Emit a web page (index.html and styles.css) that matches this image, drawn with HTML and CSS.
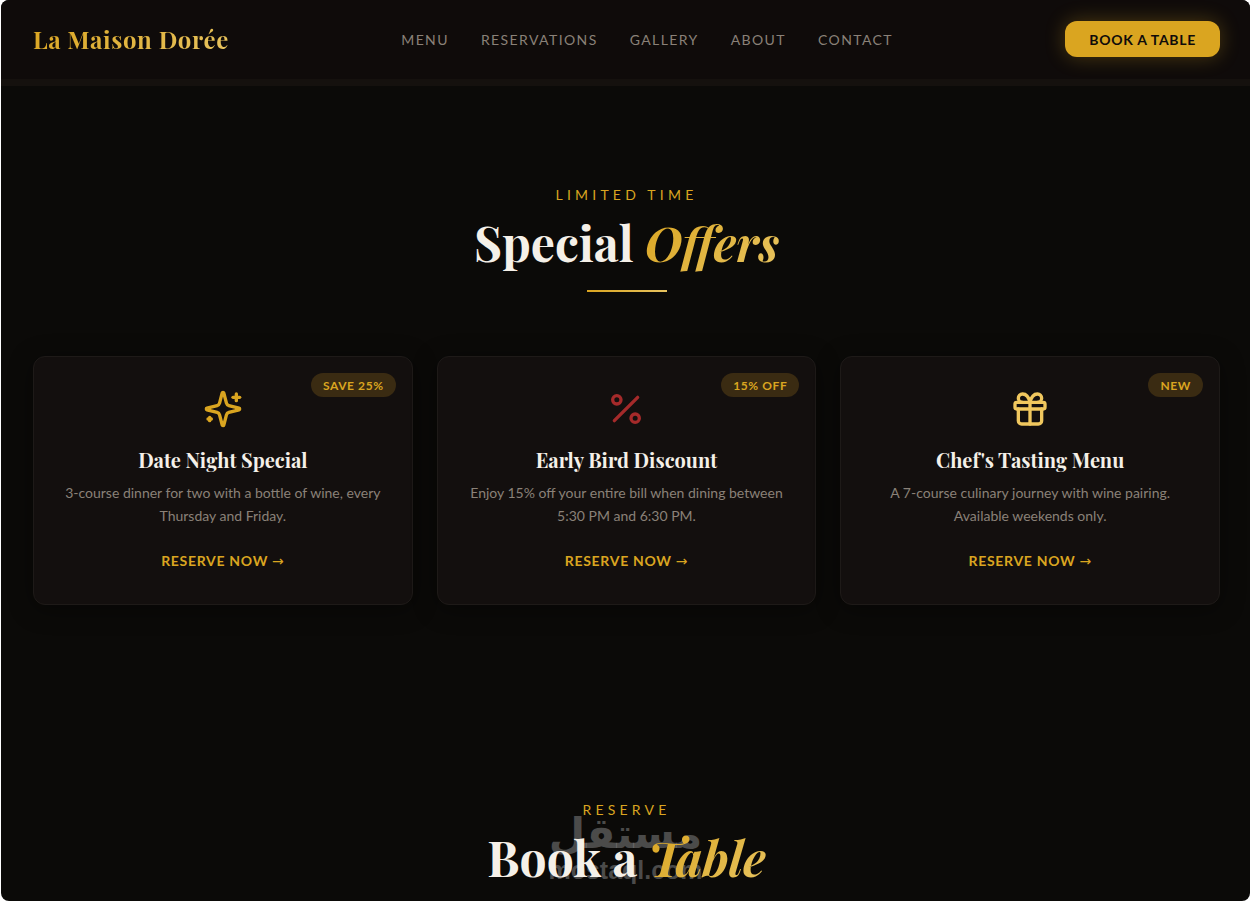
FILE: index.html
```html
<!DOCTYPE html>
<html lang="en">
<head>
<meta charset="UTF-8">
<meta name="viewport" content="width=device-width, initial-scale=1.0">
<title>La Maison Dorée</title>
<link rel="stylesheet" href="styles.css">
</head>
<body>

<div class="page">
  <!-- Header -->
  <header class="header">
    <a class="logo" href="#">La Maison Dorée</a>
    <nav class="nav">
      <a href="#menu">Menu</a>
      <a href="#reservations">Reservations</a>
      <a href="#gallery">Gallery</a>
      <a href="#about">About</a>
      <a href="#contact">Contact</a>
    </nav>
    <button class="book-btn" type="button">Book a Table</button>
  </header>

  <main>
    <!-- Special offers -->
    <section class="section">
      <div class="section-head">
        <p class="eyebrow">Limited Time</p>
        <h2 class="title">Special <em>Offers</em></h2>
        <div class="divider"></div>
      </div>

      <div class="offers">
        <article class="card">
          <span class="badge">Save 25%</span>
          <svg class="icon icon-gold" viewBox="0 0 24 24">
            <path d="M9.937 15.5A2 2 0 0 0 8.5 14.063l-6.135-1.582a.5.5 0 0 1 0-.962L8.5 9.936A2 2 0 0 0 9.937 8.5l1.582-6.135a.5.5 0 0 1 .963 0L14.063 8.5A2 2 0 0 0 15.5 9.937l6.135 1.581a.5.5 0 0 1 0 .964L15.5 14.063a2 2 0 0 0-1.437 1.437l-1.582 6.135a.5.5 0 0 1-.963 0z"/>
            <path d="M20 3v4"/>
            <path d="M22 5h-4"/>
            <path d="M4 17v2"/>
            <path d="M5 18H3"/>
          </svg>
          <h3>Date Night Special</h3>
          <p>3-course dinner for two with a bottle of wine, every Thursday and Friday.</p>
          <a class="reserve" href="#reservations">Reserve Now <span class="arrow">→</span></a>
        </article>

        <article class="card">
          <span class="badge">15% Off</span>
          <svg class="icon icon-red" viewBox="0 0 24 24">
            <line x1="19" y1="5" x2="5" y2="19"/>
            <circle cx="6.5" cy="6.5" r="2.5"/>
            <circle cx="17.5" cy="17.5" r="2.5"/>
          </svg>
          <h3>Early Bird Discount</h3>
          <p>Enjoy 15% off your entire bill when dining between 5:30 PM and 6:30 PM.</p>
          <a class="reserve" href="#reservations">Reserve Now <span class="arrow">→</span></a>
        </article>

        <article class="card">
          <span class="badge">New</span>
          <svg class="icon icon-light" viewBox="0 0 24 24">
            <rect x="3" y="8" width="18" height="4" rx="1"/>
            <path d="M12 8v13"/>
            <path d="M19 12v7a2 2 0 0 1-2 2H7a2 2 0 0 1-2-2v-7"/>
            <path d="M7.5 8a2.5 2.5 0 0 1 0-5A4.8 8 0 0 1 12 8a4.8 8 0 0 1 4.5-5 2.5 2.5 0 0 1 0 5"/>
          </svg>
          <h3>Chef's Tasting Menu</h3>
          <p>A 7-course culinary journey with wine pairing. Available weekends only.</p>
          <a class="reserve" href="#reservations">Reserve Now <span class="arrow">→</span></a>
        </article>
      </div>
    </section>

    <!-- Reservation -->
    <section class="section section-last" id="reservations">
      <div class="section-head">
        <p class="eyebrow">Reserve</p>
        <h2 class="title">Book a <em>Table</em></h2>
      </div>
    </section>
  </main>

  <!-- Watermark -->
  <div class="watermark">
    <span class="watermark-ar" lang="ar" dir="rtl">مستقل</span>
    <span class="watermark-en">mostaql.com</span>
  </div>
</div>

</body>
</html>
```
FILE: styles.css
```css
* {
  box-sizing: border-box;
  margin: 0;
  padding: 0;
}

body {
  background: #fff;
  color: #f5f0e8;
  font-family: Lato, "Liberation Sans", sans-serif;
  font-size: 14px;
}

a {
  text-decoration: none;
}

.page {
  position: relative;
  margin-left: 1px;
  min-height: 100vh;
  overflow: hidden;
  background: #0b0a08;
  border-radius: 8px;
}

/* Header */
.header {
  display: flex;
  align-items: center;
  justify-content: space-between;
  padding: 21px 30px 22px 32px;
  background: #0f0b0a;
  border-bottom: 7px solid #15110e;
}

.logo {
  font-family: "Playfair Display", "Liberation Serif", serif;
  font-size: 24px;
  font-weight: 700;
  line-height: 36px;
  letter-spacing: 0.025em;
  background: linear-gradient(135deg, #daa520, #e8c460);
  -webkit-background-clip: text;
  background-clip: text;
  color: transparent;
}

.nav {
  display: flex;
  gap: 32px;
}

.nav a {
  color: #8a8178;
  letter-spacing: 0.1em;
  text-transform: uppercase;
}

.book-btn {
  height: 36px;
  padding: 0 24px;
  border: none;
  border-radius: 12px;
  background: #daa520;
  box-shadow: 0 0 20px rgba(218, 165, 32, 0.3);
  color: #0f0b0a;
  font-family: inherit;
  font-size: 14px;
  font-weight: 700;
  letter-spacing: 0.05em;
  text-transform: uppercase;
  cursor: pointer;
}

/* Sections */
.section {
  padding: 98px 30px 96px 32px;
}

.section-last {
  padding-bottom: 8px;
}

.section-head {
  position: relative;
  z-index: 1;
  text-align: center;
}

.eyebrow {
  margin-bottom: 8px;
  color: #daa520;
  line-height: 22px;
  letter-spacing: 0.3em;
  text-transform: uppercase;
}

.title {
  font-family: "Playfair Display", "Liberation Serif", serif;
  font-size: 48px;
  font-weight: 700;
  line-height: 56px;
}

.title em {
  background: linear-gradient(135deg, #daa520, #e8c460);
  -webkit-background-clip: text;
  background-clip: text;
  color: transparent;
}

.divider {
  width: 80px;
  height: 2px;
  margin: 20px auto 64px;
  background: linear-gradient(90deg, #daa520, #e8c460);
}

/* Offer cards */
.offers {
  display: grid;
  grid-template-columns: repeat(3, 1fr);
  gap: 24px;
}

.card {
  position: relative;
  display: flex;
  flex-direction: column;
  align-items: center;
  padding: 32px 28px;
  border: 1px solid #1e1a18;
  border-radius: 12px;
  background: #130f0e;
  box-shadow: 0 4px 24px rgba(0, 0, 0, 0.4);
  text-align: center;
}

.badge {
  position: absolute;
  top: 16px;
  right: 16px;
  padding: 2px 12px 0;
  border-radius: 12px;
  background: #3a2b12;
  color: #daa520;
  font-size: 12px;
  font-weight: 700;
  line-height: 22px;
  letter-spacing: 0.05em;
  text-transform: uppercase;
}

.icon {
  width: 40px;
  height: 40px;
  margin-bottom: 16px;
  fill: none;
  stroke: currentColor;
  stroke-width: 2;
  stroke-linecap: round;
  stroke-linejoin: round;
}

.icon-gold {
  color: #daa520;
}

.icon-red {
  color: #a52a2a;
}

.icon-light {
  color: #f0c75e;
}

.card h3 {
  margin-bottom: 6px;
  font-family: "Playfair Display", "Liberation Serif", serif;
  font-size: 20px;
  font-weight: 700;
  line-height: 30px;
}

.card p {
  margin-bottom: 23px;
  color: #8a8178;
  line-height: 23px;
}

.reserve {
  color: #daa520;
  font-weight: 700;
  line-height: 22px;
  letter-spacing: 0.05em;
  text-transform: uppercase;
}

.arrow {
  font-family: "DejaVu Sans", sans-serif;
  font-weight: 400;
}

/* Watermark */
.watermark {
  position: absolute;
  bottom: 17px;
  left: 50%;
  display: flex;
  flex-direction: column;
  align-items: center;
  transform: translateX(-50%);
  color: rgba(140, 140, 140, 0.5);
  font-weight: 700;
  pointer-events: none;
}

.watermark-ar {
  font-family: "DejaVu Sans", sans-serif;
  font-size: 42px;
  line-height: 44px;
}

.watermark-en {
  font-family: "Liberation Sans", sans-serif;
  font-size: 25px;
  line-height: 28px;
}
```
